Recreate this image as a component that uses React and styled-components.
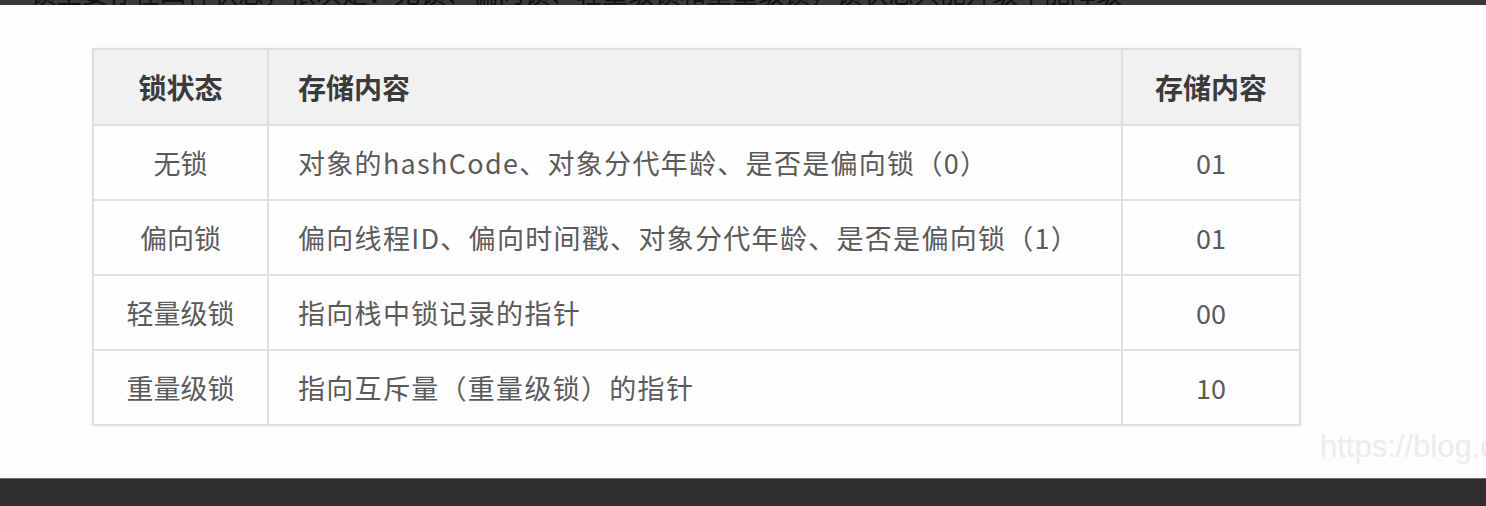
import React from "react";
import styled, { createGlobalStyle } from "styled-components";

const GlobalStyle = createGlobalStyle`
  html, body {
    margin: 0;
    padding: 0;
    background: #fdfdfd;
  }
`;

const Page = styled.div`
  width: 1486px;
  height: 506px;
  display: flex;
  flex-direction: column;
  overflow: hidden;
  font-family: "Noto Sans CJK SC", "Noto Sans", sans-serif;
`;

const TopStrip = styled.div`
  height: 5px;
  background: #3a3a3a;
  overflow: hidden;
  padding-left: 30px;
  & > span {
    display: block;
    margin-top: -21px;
    font-size: 26px;
    line-height: 26px;
    color: #111;
    white-space: nowrap;
  }
`;

const Content = styled.div`
  flex: 1;
  display: flex;
  flex-direction: column;
  padding: 43px 0 0 92px;
  background: #fdfdfd;
`;

const Table = styled.table`
  width: 1207px;
  border-collapse: collapse;
  border: 2px solid #dedede;
  box-shadow: 0 0 3px rgba(0, 0, 0, 0.06);
  table-layout: fixed;
`;

const HeadCell = styled.th`
  height: 74px;
  padding: 0 ${(p) => (p.$left ? "29px" : "0")};
  background: #f1f1f1;
  border: 2px solid #dedede;
  font-size: 28px;
  font-weight: 700;
  color: #3a3a3a;
  text-align: ${(p) => (p.$left ? "left" : "center")};
`;

const Cell = styled.td`
  height: 73px;
  padding: 0 ${(p) => (p.$left ? "29px" : "0")};
  background: #fefefe;
  border: 2px solid #e0e0e0;
  font-size: 27px;
  font-weight: 400;
  letter-spacing: ${(p) => (p.$left ? "1.3px" : "0")};
  color: #5a5a5a;
  text-align: ${(p) => (p.$left ? "left" : "center")};
  white-space: nowrap;
`;

const Watermark = styled.div`
  margin: 4px 0 0 1228px;
  font-family: "Liberation Sans", sans-serif;
  font-size: 31px;
  line-height: 34px;
  color: #ececec;
  white-space: nowrap;
`;

const BottomBar = styled.div`
  height: 27px;
  background: #303030;
  border-top: 1px solid #6a6a6a;
`;

const rows = [
  ["无锁", "对象的hashCode、对象分代年龄、是否是偏向锁（0）", "01"],
  ["偏向锁", "偏向线程ID、偏向时间戳、对象分代年龄、是否是偏向锁（1）", "01"],
  ["轻量级锁", "指向栈中锁记录的指针", "00"],
  ["重量级锁", "指向互斥量（重量级锁）的指针", "10"],
];

export default function App() {
  return (
    <Page>
      <GlobalStyle />
      <TopStrip>
        <span>锁主要存在四种状态，依次是：无锁、偏向锁、轻量级锁和重量级锁，锁状态只能升级不能降级</span>
      </TopStrip>
      <Content>
        <Table>
          <colgroup>
            <col style={{ width: 175 }} />
            <col style={{ width: 854 }} />
            <col style={{ width: 178 }} />
          </colgroup>
          <thead>
            <tr>
              <HeadCell>锁状态</HeadCell>
              <HeadCell $left>存储内容</HeadCell>
              <HeadCell>存储内容</HeadCell>
            </tr>
          </thead>
          <tbody>
            {rows.map((r) => (
              <tr key={r[0]}>
                <Cell>{r[0]}</Cell>
                <Cell $left>{r[1]}</Cell>
                <Cell>{r[2]}</Cell>
              </tr>
            ))}
          </tbody>
        </Table>
        <Watermark>https://blog.csdn.net</Watermark>
      </Content>
      <BottomBar />
    </Page>
  );
}
